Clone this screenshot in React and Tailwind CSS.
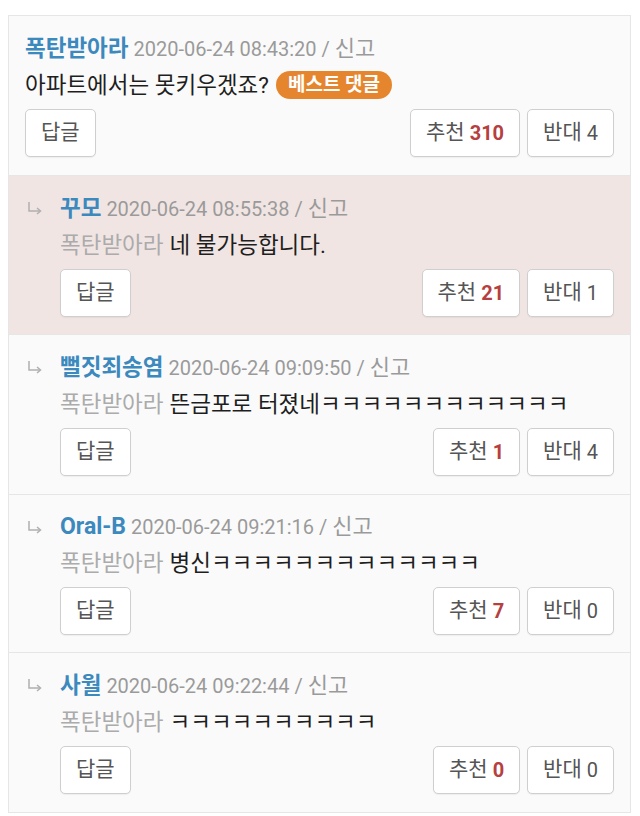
import React from 'react'

const comments = [
  { id: 1, name: '폭탄받아라', date: '2020-06-24 08:43:20', text: '아파트에서는 못키우겠죠?', best: true, up: 310, down: 4 },
  { id: 2, name: '꾸모', date: '2020-06-24 08:55:38', to: '폭탄받아라', text: '네 불가능합니다.', up: 21, down: 1, pink: true },
  { id: 3, name: '뻘짓죄송염', date: '2020-06-24 09:09:50', to: '폭탄받아라', text: '뜬금포로 터졌네ㅋㅋㅋㅋㅋㅋㅋㅋㅋㅋㅋㅋ', up: 1, down: 4 },
  { id: 4, name: 'Oral-B', date: '2020-06-24 09:21:16', to: '폭탄받아라', text: '병신ㅋㅋㅋㅋㅋㅋㅋㅋㅋㅋㅋㅋㅋ', up: 7, down: 0, latin: true },
  { id: 5, name: '사월', date: '2020-06-24 09:22:44', to: '폭탄받아라', text: 'ㅋㅋㅋㅋㅋㅋㅋㅋㅋㅋ', up: 0, down: 0 },
]

function ReplyArrow() {
  return (
    <svg width="16" height="14" viewBox="0 0 16 14" className="shrink-0 ml-[2px]">
      <path d="M2 1 V10 H13" fill="none" stroke="#b0b0b0" strokeWidth="1.5" />
      <path d="M10 7 L13.5 10 L10 13" fill="none" stroke="#b0b0b0" strokeWidth="1.5" />
    </svg>
  )
}

function Btn({ children }) {
  return (
    <button className="h-12 px-[15px] bg-white border border-[#cfcfcf] rounded-[5px] text-[20px] text-[#555] shadow-[0_1px_1px_rgba(0,0,0,0.05)] flex items-center">
      {children}
    </button>
  )
}

function Comment({ c }) {
  const reply = !!c.to
  return (
    <div className={`border-b border-[#e6e6e6] pt-[14px] pb-[17.5px] pl-4 pr-4 ${c.pink ? 'bg-[#f1e5e3]' : 'bg-[#fafafa]'}`}>
      <div className="flex">
        {reply && (
          <div className="w-[35px] h-[36px] flex items-center">
            <ReplyArrow />
          </div>
        )}
        <div className="flex-1">
          <div className="leading-[36px] text-[20px] whitespace-nowrap">
            <span className={`font-bold text-[#3c89be] ${c.latin ? 'text-[23px]' : 'text-[22.5px]'}`}>{c.name}</span>
            <span className="text-[#9a9a9a]"> {c.date} / <span className="text-[22px]">신고</span></span>
          </div>
          <div className="leading-[36px] text-[22.5px] flex items-center whitespace-nowrap">
            {reply && <span className="text-[#ababab] mr-[6px]">{c.to}</span>}
            <span className="text-[#1e1e1e]">{c.text}</span>
            {c.best && (
              <span className="ml-[7px] h-[28px] px-[12px] rounded-full bg-[#e5862e] text-white font-bold text-[19px] leading-[28px]">
                베스트 댓글
              </span>
            )}
          </div>
          <div className="mt-[6px] flex items-center">
            <Btn><span className="text-[21px]">답글</span></Btn>
            <div className="ml-auto flex gap-[7px]">
              <Btn>
                <span className="text-[21px]">추천</span>
                <span className="ml-[5px] font-bold text-[#b5403f]">{c.up}</span>
              </Btn>
              <Btn>
                <span className="text-[21px]">반대</span>
                <span className="ml-[5px]">{c.down}</span>
              </Btn>
            </div>
          </div>
        </div>
      </div>
    </div>
  )
}

export default function App() {
  return (
    <div className="w-[640px] h-[816px] bg-white overflow-hidden pt-[15px] font-['Roboto','Noto_Sans_CJK_KR',sans-serif]">
      <div className="ml-2 mr-[9px] border-l border-r border-t border-[#e6e6e6]">
        {comments.map((c) => (
          <Comment key={c.id} c={c} />
        ))}
      </div>
    </div>
  )
}
